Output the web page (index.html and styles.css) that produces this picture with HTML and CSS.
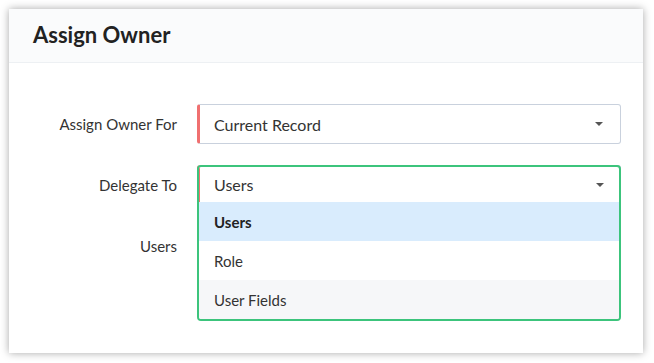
FILE: index.html
```html
<!DOCTYPE html>
<html lang="en">

<head>
  <meta charset="UTF-8">
  <meta name="viewport" content="width=device-width, initial-scale=1.0">
  <title>Assign Owner</title>
  <link rel="stylesheet" href="styles.css">
</head>

<body>
  <div class="card">
    <div class="card-header">
      <h1 class="title">Assign Owner</h1>
    </div>

    <div class="card-body">
      <div class="form-row">
        <label class="form-label">Assign Owner For</label>
        <div class="select">
          <span class="select-value">Current Record</span>
          <span class="caret"></span>
        </div>
      </div>

      <div class="form-row">
        <label class="form-label">Delegate To</label>
        <div class="select select-open">
          <span class="select-value">Users</span>
          <span class="caret"></span>

          <!-- opened list lies over the next row -->
          <div class="dropdown">
            <div class="dropdown-head">
              <span class="select-value">Users</span>
              <span class="caret"></span>
            </div>
            <ul class="options">
              <li class="option option-active">Users</li>
              <li class="option">Role</li>
              <li class="option option-alt">User Fields</li>
            </ul>
          </div>
        </div>
      </div>

      <div class="form-row">
        <label class="form-label">Users</label>
        <div class="select">
          <span class="select-value"></span>
          <span class="caret"></span>
        </div>
      </div>
    </div>
  </div>
</body>

</html>
```

FILE: styles.css
```css
* {
  margin: 0;
  padding: 0;
  box-sizing: border-box;
}

body {
  padding: 9px;
  background: #fff;
  font-family: Lato, 'Open Sans', sans-serif;
  color: #333;
}

.card {
  width: 634px;
  height: 344px;
  background: #fff;
  box-shadow: 0 0 8px rgba(0, 0, 0, 0.35);
}

.card-header {
  height: 54px;
  padding: 0 24px;
  display: flex;
  align-items: center;
  background: #fafbfc;
  border-bottom: 1px solid #edf0f3;
}

.title {
  font-size: 22px;
  font-weight: 700;
  color: #222;
  padding-bottom: 3px;
}

.card-body {
  padding: 41px 22px 0 0;
  display: flex;
  flex-direction: column;
  gap: 21px;
}

.form-row {
  display: grid;
  grid-template-columns: 168px 1fr;
  column-gap: 20px;
  align-items: center;
}

.form-label {
  text-align: right;
  font-size: 15px;
  color: #333;
}

.select {
  position: relative;
  height: 40px;
  display: flex;
  align-items: center;
  justify-content: space-between;
  padding: 0 17px 0 14px;
  border: 1px solid #c9d1dd;
  border-left: 3px solid #f07070;
  border-radius: 3px;
  background: #fff;
}

.select-value {
  font-size: 16px;
  color: #333;
}

.caret {
  width: 0;
  height: 0;
  border-left: 4px solid transparent;
  border-right: 4px solid transparent;
  border-top: 4px solid #555;
}

.dropdown {
  position: absolute;
  top: -1px;
  left: -3px;
  right: -1px;
  z-index: 2;
  border: 2px solid #3cc47c;
  border-radius: 4px;
  background: #fff;
  overflow: hidden;
}

.dropdown-head {
  height: 35px;
  margin-left: -2px;
  display: flex;
  align-items: center;
  justify-content: space-between;
  padding: 0 15px 0 14px;
  border-left: 3px solid #f07070;
}

.options {
  list-style: none;
}

.option {
  height: 39px;
  display: flex;
  align-items: center;
  padding-left: 15px;
  font-size: 15px;
  color: #333;
}

.option-active {
  background: #d9ecfd;
  font-weight: 700;
  color: #222;
}

.option-alt {
  background: #f6f7f9;
}
```
